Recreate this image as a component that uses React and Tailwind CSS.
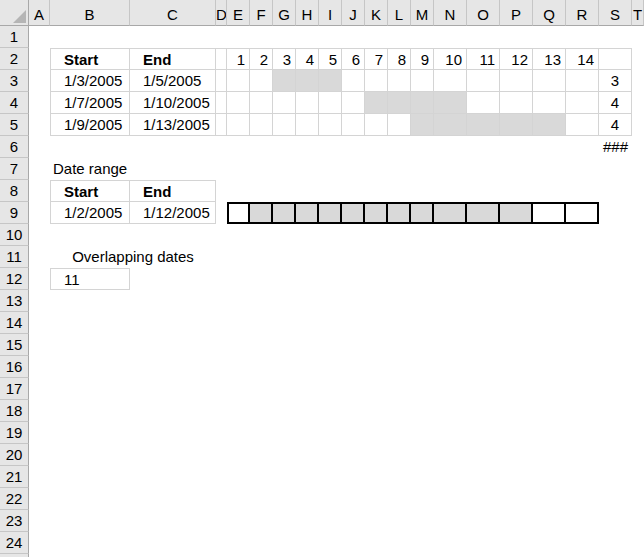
import React from 'react';

const COLS = ['A', 'B', 'C', 'D', 'E', 'F', 'G', 'H', 'I', 'J', 'K', 'L', 'M', 'N', 'O', 'P', 'Q', 'R', 'S', 'T'];

// rows 3-5: start, end, [first day, last day] shaded, count
const ranges = [
    { start: '1/3/2005', end: '1/5/2005', from: 3, to: 5, count: 3 },
    { start: '1/7/2005', end: '1/10/2005', from: 7, to: 10, count: 4 },
    { start: '1/9/2005', end: '1/13/2005', from: 9, to: 13, count: 4 },
];

const tb = 'border-r border-b border-[#d4d4d4]';

// col index: A=0, B=1 ... day d lives at index 3 + d
const renderCell = (row, col) => {
    const key = `${row}-${col}`;
    const day = col - 3;

    if (row === 2) {
        if (col === 0) return <div key={key} />;
        const base = `border-t ${tb} ${col === 1 ? 'border-l' : ''}`;
        if (col === 1) return <div key={key} className={`${base} pl-[13px] font-bold`}>Start</div>;
        if (col === 2) return <div key={key} className={`${base} pl-[13px] font-bold`}>End</div>;
        if (day >= 1 && day <= 14) return <div key={key} className={`${base} text-right pr-[4px]`}>{day}</div>;
        if (col === 3 || col === 18) return <div key={key} className={base} />;
        return <div key={key} />;
    }

    if (row >= 3 && row <= 5) {
        const r = ranges[row - 3];
        if (col === 0 || col === 19) return <div key={key} />;
        if (col === 1) return <div key={key} className={`${tb} border-l pl-[13px]`}>{r.start}</div>;
        if (col === 2) return <div key={key} className={`${tb} pl-[13px] whitespace-nowrap`}>{r.end}</div>;
        if (col === 18) return <div key={key} className={`${tb} text-center`}>{r.count}</div>;
        const shaded = day >= r.from && day <= r.to;
        return <div key={key} className={`${tb} ${shaded ? 'bg-[#d9d9d9]' : ''}`} />;
    }

    if (row === 6 && col === 18) return <div key={key} className="text-right pr-[4px]">###</div>;

    if (row === 7 && col === 1) return <div key={key} className="pl-[3px] whitespace-nowrap">Date range</div>;

    if (row === 8 || row === 9) {
        if (col === 1 || col === 2) {
            const base = `${tb} ${row === 8 ? 'border-t' : ''} ${col === 1 ? 'border-l' : ''} pl-[13px] whitespace-nowrap`;
            if (row === 8) return <div key={key} className={`${base} font-bold`}>{col === 1 ? 'Start' : 'End'}</div>;
            return <div key={key} className={base}>{col === 1 ? '1/2/2005' : '1/12/2005'}</div>;
        }
        if (row === 9 && day >= 1 && day <= 14) {
            const shaded = day >= 2 && day <= 12;
            return (
                <div
                    key={key}
                    className={`border-y-2 border-r-2 border-black ${day === 1 ? 'border-l-2' : ''} ${shaded ? 'bg-[#d9d9d9]' : ''}`}
                />
            );
        }
        return <div key={key} />;
    }

    if (row === 11) {
        if (col === 1) return <div key={key} className="col-span-2 text-center whitespace-nowrap">Overlapping dates</div>;
        if (col === 2) return null;
    }

    if (row === 12 && col === 1) return <div key={key} className={`${tb} border-t border-l pl-[13px]`}>11</div>;

    return <div key={key} />;
};

const App = () => {
    const rows = Array.from({ length: 25 }, (_, i) => i + 1);

    return (
        <div className="w-[644px] h-[557px] overflow-hidden bg-white text-black text-[15px] leading-[22px] font-['Liberation_Sans',Arial,sans-serif]">
            <div className="grid grid-cols-[29px_21px_80px_86px_11px_repeat(9,23px)_repeat(6,33px)_1fr] grid-rows-[26px_repeat(25,22px)]">
                {/* corner */}
                <div className="relative bg-[#e6e6e6] border-r border-b border-[#a8a8a8]">
                    <svg className="absolute left-[13px] top-[10px]" width="13" height="13" viewBox="0 0 13 13">
                        <polygon points="13,0 13,13 0,13" fill="#b5b5b5" />
                    </svg>
                </div>
                {COLS.map((c) => (
                    <div
                        key={c}
                        className="bg-[#e6e6e6] border-r border-r-[#c6c6c6] border-b border-b-[#a8a8a8] text-center pt-[4px] overflow-hidden"
                    >
                        {c}
                    </div>
                ))}

                {rows.map((r) => (
                    <React.Fragment key={r}>
                        {/* last row is only a sliver at the bottom edge, its label is hidden */}
                        <div className="bg-[#e6e6e6] border-r border-r-[#a8a8a8] border-b border-b-[#c6c6c6] text-center">
                            {r < 25 ? r : ''}
                        </div>
                        {COLS.map((_, ci) => renderCell(r, ci))}
                    </React.Fragment>
                ))}
            </div>
        </div>
    );
};

export default App;
